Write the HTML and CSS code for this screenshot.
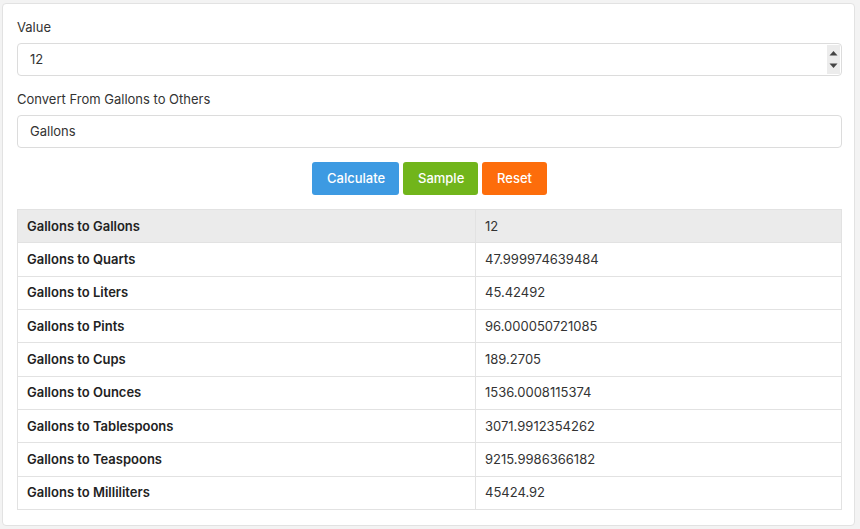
FILE: index.html
```html
<!DOCTYPE html>
<html>
<head>
<meta charset="utf-8">
<link rel="stylesheet" href="styles.css">
</head>
<body>
<div class="card">
  <label class="label">Value</label>
  <div class="field">
    <span class="field-text">12</span>
    <span class="spinner">
      <svg width="9" height="6" viewBox="0 0 9 6"><path d="M0.5 5.5 L4.5 1 L8.5 5.5 Z" fill="#444"/></svg>
      <svg width="9" height="6" viewBox="0 0 9 6"><path d="M0.5 0.5 L4.5 5 L8.5 0.5 Z" fill="#444"/></svg>
    </span>
  </div>
  <label class="label label-2">Convert From Gallons to Others</label>
  <div class="field">
    <span class="field-text">Gallons</span>
  </div>
  <div class="buttons">
    <button class="btn btn-blue">Calculate</button>
    <button class="btn btn-green">Sample</button>
    <button class="btn btn-orange">Reset</button>
  </div>
  <table class="results">
    <tr class="head"><td>Gallons to Gallons</td><td>12</td></tr>
    <tr><td>Gallons to Quarts</td><td>47.999974639484</td></tr>
    <tr><td>Gallons to Liters</td><td>45.42492</td></tr>
    <tr><td>Gallons to Pints</td><td>96.000050721085</td></tr>
    <tr><td>Gallons to Cups</td><td>189.2705</td></tr>
    <tr><td>Gallons to Ounces</td><td>1536.0008115374</td></tr>
    <tr><td>Gallons to Tablespoons</td><td>3071.9912354262</td></tr>
    <tr><td>Gallons to Teaspoons</td><td>9215.9986366182</td></tr>
    <tr><td>Gallons to Milliliters</td><td>45424.92</td></tr>
  </table>
</div>
</body>
</html>
```

FILE: styles.css
```css
html, body {
  margin: 0;
  padding: 0;
  background: #f3f3f3;
}
body {
  padding: 3px 5px 4px 2px;
  font-family: Inter, "Noto Sans", sans-serif;
  font-size: 13px;
  color: #333;
}
.card {
  background: #fff;
  border: 1px solid #e2e2e2;
  border-radius: 4px;
  padding: 13px 12px 15px 14px;
  display: flex;
  flex-direction: column;
}
.label {
  display: block;
  line-height: 20px;
  margin-bottom: 6px;
  color: #333;
}
.label-2 {
  margin-top: 13px;
}
.field {
  height: 31px;
  border: 1px solid #dcdcdc;
  border-radius: 4px;
  display: flex;
  align-items: center;
  padding: 0 0 0 12px;
  background: #fff;
}
.field-text {
  flex: 1;
  line-height: 16px;
  padding-bottom: 2px;
}
.spinner {
  width: 13px;
  align-self: stretch;
  margin: 1px 1px 1px 0;
  background: #ececec;
  display: flex;
  flex-direction: column;
  align-items: center;
  justify-content: center;
  gap: 7px;
}
.spinner svg {
  display: block;
}
.buttons {
  display: flex;
  justify-content: center;
  gap: 4px;
  margin-top: 14px;
  margin-bottom: 14px;
}
.btn {
  height: 33px;
  border: none;
  border-radius: 3px;
  color: #fff;
  font-family: Inter, "Noto Sans", sans-serif;
  font-size: 13px;
  font-weight: 500;
  padding: 0 15px 2px;
}
.btn-blue { background: #3d9ae2; width: 87px; }
.btn-green { background: #71b51b; width: 75px; }
.btn-orange { background: #fd6d0b; width: 65px; }
.results {
  width: 100%;
  border-collapse: collapse;
  border: 1px solid #e2e2e2;
}
.results tr {
  height: 33.34px;
}
.results td {
  padding: 0 8px 1px 9px;
  border-top: 1px solid #e2e2e2;
  vertical-align: middle;
  color: #333;
}
.results td:first-child {
  width: 440px;
  font-weight: 600;
  border-right: 1px solid #e2e2e2;
  color: #222;
}
.results tr.head td {
  background: #ebebeb;
  border-top: none;
}
```
